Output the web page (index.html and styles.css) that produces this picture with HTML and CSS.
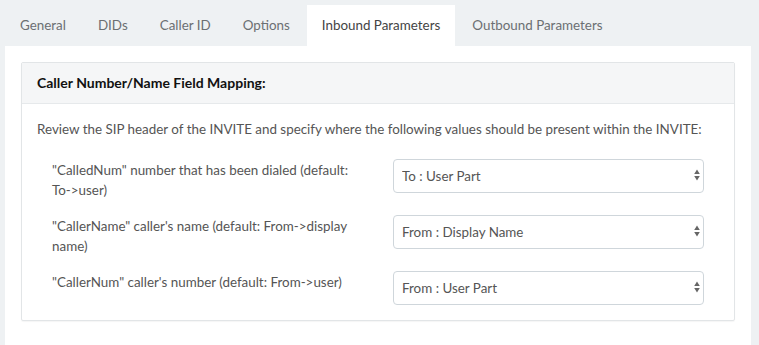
FILE: index.html
```html
<!DOCTYPE html>
<html lang="en">
<head>
    <meta charset="UTF-8">
    <title>Trunk - Inbound Parameters</title>
    <link rel="stylesheet" href="styles.css">
</head>
<body>
    <ul class="tabs">
        <li class="tab">General</li>
        <li class="tab">DIDs</li>
        <li class="tab">Caller ID</li>
        <li class="tab">Options</li>
        <li class="tab active">Inbound Parameters</li>
        <li class="tab">Outbound Parameters</li>
    </ul>

    <div class="tab-pane">
        <div class="panel">
            <div class="panel-heading">Caller Number/Name Field Mapping:</div>
            <div class="panel-body">
                <p class="intro">Review the SIP header of the INVITE and specify where the following values should be present within the INVITE:</p>

                <div class="form-row">
                    <label class="field-label">"CalledNum" number that has been dialed (default: To-&gt;user)</label>
                    <div class="field">
                        <div class="select-wrap">
                            <select>
                                <option>To : User Part</option>
                            </select>
                            <svg class="caret" width="6" height="12" viewBox="0 0 6 12"><path d="M3 0.5 L5.8 5 L0.2 5 Z M3 11.5 L5.8 7 L0.2 7 Z" fill="#666"/></svg>
                        </div>
                    </div>
                </div>

                <div class="form-row">
                    <label class="field-label">"CallerName" caller's name (default: From-&gt;display name)</label>
                    <div class="field">
                        <div class="select-wrap">
                            <select>
                                <option>From : Display Name</option>
                            </select>
                            <svg class="caret" width="6" height="12" viewBox="0 0 6 12"><path d="M3 0.5 L5.8 5 L0.2 5 Z M3 11.5 L5.8 7 L0.2 7 Z" fill="#666"/></svg>
                        </div>
                    </div>
                </div>

                <div class="form-row">
                    <label class="field-label">"CallerNum" caller's number (default: From-&gt;user)</label>
                    <div class="field">
                        <div class="select-wrap">
                            <select>
                                <option>From : User Part</option>
                            </select>
                            <svg class="caret" width="6" height="12" viewBox="0 0 6 12"><path d="M3 0.5 L5.8 5 L0.2 5 Z M3 11.5 L5.8 7 L0.2 7 Z" fill="#666"/></svg>
                        </div>
                    </div>
                </div>
            </div>
        </div>
    </div>
</body>
</html>
```

FILE: styles.css
```css
body {
    margin: 0;
    background-color: #eef1f3;
    font-family: Lato, "Open Sans", sans-serif;
    font-size: 13.4px;
    line-height: 20px;
    color: #555;
    overflow: hidden;
}
.tabs {
    display: flex;
    list-style: none;
    margin: 0;
    padding: 5px 0 0 5px;
}
.tab {
    padding: 10px 15px;
    margin-right: 2px;
    line-height: 21px;
    color: #6b6f72;
}
.tab.active {
    background: #fff;
    color: #444;
}
.tab-pane {
    margin-left: 5px;
    width: 746px;
    height: 299px;
    box-sizing: border-box;
    background: #fff;
    padding: 16px;
}
.panel {
    border: 1px solid #e2e5e7;
    border-radius: 2px;
    box-shadow: 0 1px 1px rgba(0, 0, 0, 0.04);
}
.panel-heading {
    height: 40px;
    line-height: 40px;
    padding: 0 15px;
    background: #f5f6f7;
    border-bottom: 1px solid #e6e9eb;
    font-weight: bold;
    font-size: 14px;
    color: #111;
}
.panel-body {
    padding: 15px;
}
.intro {
    margin: 0 0 20px;
    white-space: nowrap;
}
.form-row {
    display: flex;
    margin-bottom: 15px;
}
.form-row:last-child {
    margin-bottom: 0;
}
.field-label,
.field {
    flex: 1;
    padding: 0 15px;
}
.field-label {
    padding-top: 1px;
}
.select-wrap {
    position: relative;
}
select {
    appearance: none;
    width: 100%;
    height: 34px;
    padding: 0 8px;
    border: 1px solid #cfd6db;
    border-radius: 4px;
    background: #fff;
    font: inherit;
    color: #555;
}
.caret {
    position: absolute;
    right: 4px;
    top: 10px;
}
```
